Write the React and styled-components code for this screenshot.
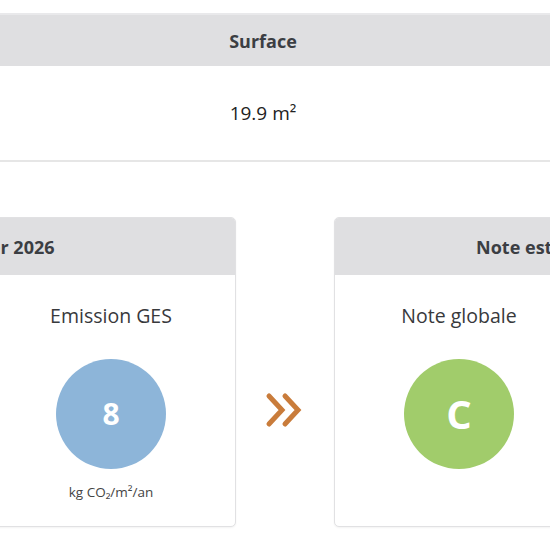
import React from "react";
import styled, { createGlobalStyle } from "styled-components";

const GlobalStyle = createGlobalStyle`
  html, body { margin: 0; padding: 0; background: #ffffff; }
  body { overflow: hidden; font-family: "Open Sans", "DejaVu Sans", sans-serif; color: #333; }
`;

const Page = styled.div`
  width: 550px;
  height: 550px;
  overflow: hidden;
  padding-top: 13px;
  box-sizing: border-box;
`;

const Table = styled.div`
  margin: 0 -20px 0 -44px;
`;

const TableHead = styled.div`
  height: 53px;
  box-sizing: border-box;
  background: #dfdfe1;
  border-top: 2px solid #e9e9eb;
  display: flex;
  align-items: center;
  justify-content: center;
  font-weight: 700;
  font-size: 18px;
  color: #3b3e43;
`;

const TableCell = styled.div`
  height: 96px;
  box-sizing: border-box;
  border-bottom: 2px solid #e6e6e6;
  display: flex;
  align-items: center;
  justify-content: center;
  font-size: 19px;
  color: #222;
`;

const CardsRow = styled.div`
  display: flex;
  align-items: stretch;
  margin-top: 55px;
  margin-left: ${(p) => p.$offset}px;
`;

const Card = styled.div`
  flex: none;
  width: ${(p) => p.$width}px;
  height: 310px;
  box-sizing: border-box;
  border: 1px solid #e1e1e3;
  border-radius: 5px;
  background: #fff;
  overflow: hidden;
  display: flex;
  flex-direction: column;
  box-shadow: 0 1px 2px rgba(0, 0, 0, 0.05);
`;

const CardHead = styled.div`
  height: 57px;
  flex: none;
  background: #dfdfe1;
  display: flex;
  align-items: center;
  justify-content: center;
  font-weight: 700;
  font-size: 18px;
  color: #3b3e43;
  white-space: nowrap;
`;

const CardBody = styled.div`
  flex: 1;
  display: grid;
  grid-template-columns: ${(p) => p.$cols};
`;

const Column = styled.div`
  display: flex;
  flex-direction: column;
  align-items: center;
  padding-top: 27px;
`;

const Label = styled.div`
  font-size: 19.5px;
  line-height: 27px;
  color: #38393c;
  white-space: nowrap;
`;

const Circle = styled.div`
  width: 110px;
  height: 110px;
  margin-top: 30px;
  border-radius: 50%;
  background: ${(p) => p.$color};
  display: flex;
  align-items: center;
  justify-content: center;
  color: #fff;
  font-weight: 700;
  line-height: 1;
  font-size: ${(p) => p.$size}px;
`;

const Unit = styled.div`
  margin-top: 14px;
  font-size: 13.5px;
  line-height: 19px;
  color: #444;
`;

const ArrowCol = styled.div`
  flex: none;
  width: 98px;
  display: flex;
  justify-content: center;
  padding-top: 175px;
  box-sizing: border-box;
`;

const Chevrons = () => (
  <svg width="40" height="36" viewBox="0 0 40 36">
    <g fill="none" stroke="#c97c3b" strokeWidth="5" strokeLinecap="round" strokeLinejoin="miter">
      <polyline points="4,4 17,18 4,32" />
      <polyline points="20,4 33,18 20,32" />
    </g>
  </svg>
);

const Metric = ({ label, value, color, size = 30, unit }) => (
  <Column>
    <Label>{label}</Label>
    <Circle $color={color} $size={size}>{value}</Circle>
    {unit && <Unit>{unit}</Unit>}
  </Column>
);

const LEFT_WIDTH = 708;
const RIGHT_WIDTH = 652;

export default function App() {
  return (
    <Page>
      <GlobalStyle />
      <Table>
        <TableHead>Surface</TableHead>
        <TableCell>19.9 m²</TableCell>
      </Table>
      <CardsRow $offset={236 - LEFT_WIDTH}>
        <Card $width={LEFT_WIDTH}>
          <CardHead>Note actuelle avant le 1er janvier 2026</CardHead>
          <CardBody $cols="1fr 1fr 248px">
            <Metric label="Note globale" value="E" color="#f0c94a" size={40} />
            <Metric label="Consommation" value="420" color="#f0c94a" unit="kWh/m²/an" />
            <Metric label="Emission GES" value="8" color="#8db5d9" unit="kg CO₂/m²/an" />
          </CardBody>
        </Card>
        <ArrowCol>
          <Chevrons />
        </ArrowCol>
        <Card $width={RIGHT_WIDTH}>
          <CardHead>Note estimée à partir du 1er janvier 2026</CardHead>
          <CardBody $cols="248px 1fr 1fr">
            <Metric label="Note globale" value="C" color="#a1cc6b" size={40} />
            <Metric label="Consommation" value="170" color="#a1cc6b" unit="kWh/m²/an" />
            <Metric label="Emission GES" value="8" color="#8db5d9" unit="kg CO₂/m²/an" />
          </CardBody>
        </Card>
      </CardsRow>
    </Page>
  );
}
